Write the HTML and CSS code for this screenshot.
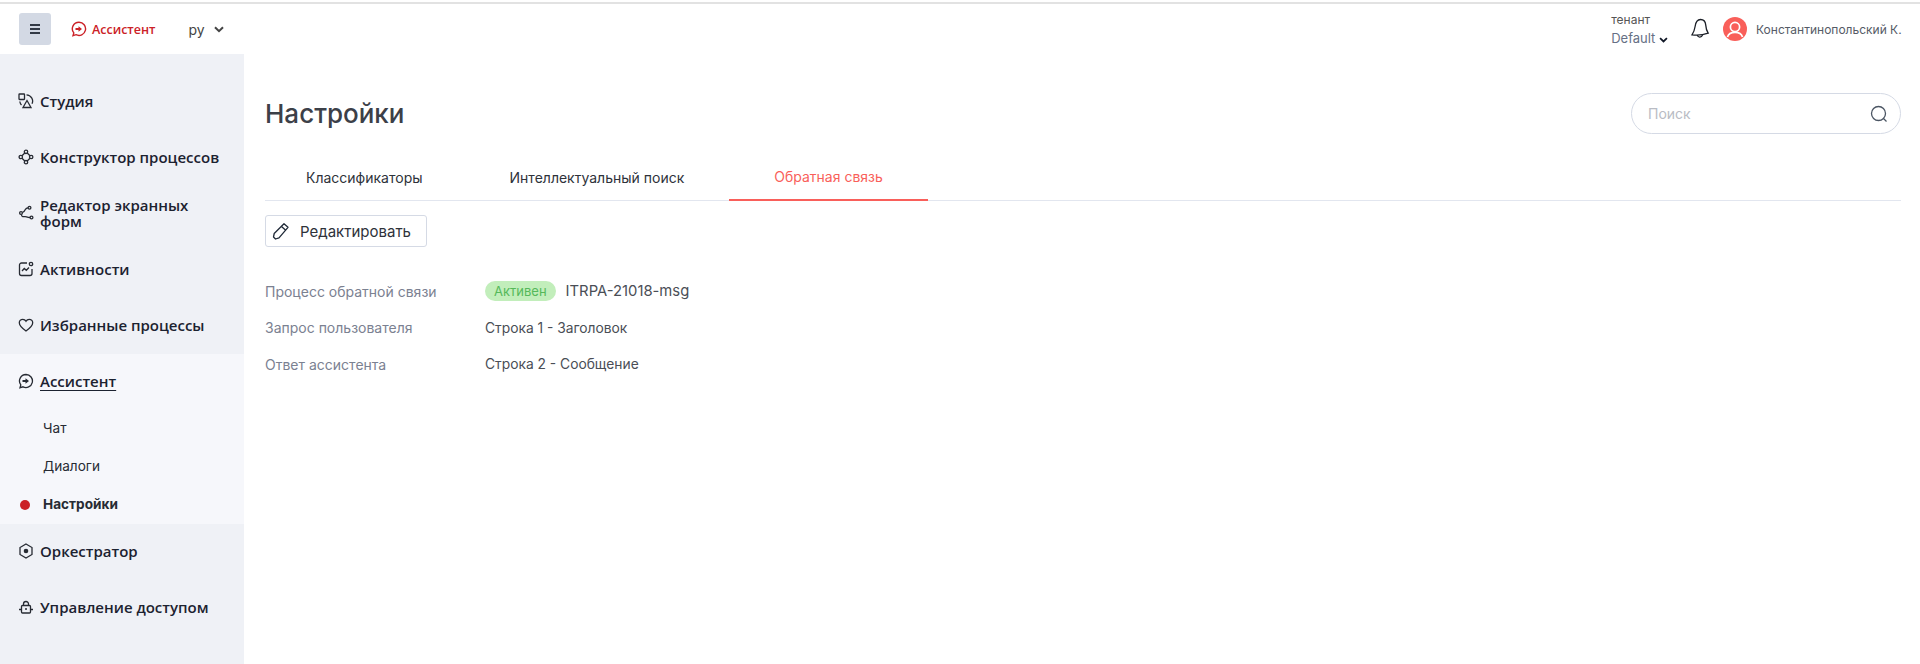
FILE: index.html
```html
<!DOCTYPE html>
<html lang="ru">

<head>
    <meta charset="UTF-8">
    <meta name="viewport" content="width=device-width, initial-scale=1.0">
    <title>Настройки</title>
    <link rel="stylesheet" href="styles.css">
</head>

<body>
    <header class="topbar">
        <button class="burger" aria-label="Меню">
            <svg width="14" height="14" viewBox="0 0 14 14" fill="none" stroke="currentColor" stroke-width="1.8">
                <path d="M2 3h10M2 7h10M2 11h10"></path>
            </svg>
        </button>
        <div class="brand">
            <svg width="16" height="16" viewBox="0 0 16 16" fill="none" stroke="currentColor" stroke-width="1.4">
                <path d="M8 1.2a6.6 6.6 0 1 1-3 12.5l-3 1 .8-2.8A6.6 6.6 0 0 1 8 1.2z"></path>
                <path d="M4.5 7h3V5.2L11 8l-3.500 2.800V9h-3z" fill="currentColor" stroke="none"></path>
            </svg>
            <span>Ассистент</span>
        </div>
        <div class="lang">
            <span>ру</span>
            <svg width="10" height="7" viewBox="0 0 10 7" fill="none" stroke="currentColor" stroke-width="2">
                <path d="M1 1.200l4 4 4-4"></path>
            </svg>
        </div>
        <div class="topbar-right">
            <div class="tenant">
                <span class="tenant-label">тенант</span>
                <span class="tenant-value">Default
                    <svg width="9" height="6" viewBox="0 0 10 7" fill="none" stroke="#111827" stroke-width="2">
                        <path d="M1 1.200l4 4 4-4"></path>
                    </svg>
                </span>
            </div>
            <svg class="bell" width="20" height="22" viewBox="0 0 20 22" fill="none" stroke="#1c2028" stroke-width="1.300">
                <path d="M10.500 1.500c3.200 0 5 2.400 5.200 5.400.2 3 .6 5.400 2.500 8.300-4.500 1.500-10.500 2.300-16.200 1.600 1.700-2.500 2.600-5 3.100-8.300.5-3.700 2.300-7 5.400-7z"></path>
                <path d="M7.300 17c.3 2.400 4 3 5.300.1"></path>
            </svg>
            <div class="avatar">
                <svg width="24" height="24" viewBox="0 0 24 24" fill="none" stroke="#fff" stroke-width="1.700">
                    <circle cx="12" cy="10" r="4.600"></circle>
                    <path d="M4.500 20c1-3.500 4-4.600 7.500-4.600s6.500 1.100 7.500 4.600"></path>
                </svg>
            </div>
            <span class="username">Константинопольский К.</span>
        </div>
    </header>

    <div class="layout">
        <nav class="sidebar">
            <a class="nav-item">
                <svg class="nav-icon" viewBox="0 0 16 16"><rect x="1" y="1" width="5.500" height="5.500" rx=".5"></rect><path d="M8.500 1.800a6.300 6.300 0 0 1 5.500 9M1.800 8.500a6.300 6.300 0 0 0 1.700 3.500"></path><path d="M9 7.500l4 7H5z"></path></svg>
                <span>Студия</span>
            </a>
            <a class="nav-item">
                <svg class="nav-icon" viewBox="0 0 16 16"><circle cx="8" cy="2.800" r="1.700"></circle><circle cx="8" cy="13.200" r="1.700"></circle><circle cx="2.800" cy="8" r="1.700"></circle><circle cx="13.200" cy="8" r="1.700"></circle><path d="M6.800 4L4 6.800M9.200 4L12 6.800M4 9.200L6.800 12M12 9.200L9.200 12"></path></svg>
                <span>Конструктор процессов</span>
            </a>
            <a class="nav-item">
                <svg class="nav-icon" viewBox="0 0 16 16"><circle cx="3" cy="8" r="1.400"></circle><circle cx="13.500" cy="12.500" r="1.400"></circle><circle cx="11.500" cy="2.800" r="1.400"></circle><path d="M10 2.800C6.500 2.800 8 6 4.500 7.500M3.500 9.500c0 3.500 3 1.500 5 2.300 1.500.6 2 .7 3.500.7"></path></svg>
                <span>Редактор экранных форм</span>
            </a>
            <a class="nav-item">
                <svg class="nav-icon" viewBox="0 0 16 16"><path d="M9 2H3.500A2 2 0 0 0 1.500 4v8.500a2 2 0 0 0 2 2H12a2 2 0 0 0 2-2V8"></path><circle cx="13" cy="3" r="1.700"></circle><path d="M4 10l2.300-2.500 2 1.800L11 6.500"></path></svg>
                <span>Активности</span>
            </a>
            <a class="nav-item">
                <svg class="nav-icon" viewBox="0 0 16 16"><path d="M8 14C3 10.500 1.300 8.300 1.300 5.800 1.300 3.700 3 2.300 4.800 2.300c1.300 0 2.500.7 3.200 1.900.7-1.200 1.900-1.900 3.200-1.900 1.800 0 3.500 1.400 3.500 3.500 0 2.500-1.700 4.700-6.700 8.200z"></path></svg>
                <span>Избранные процессы</span>
            </a>
            <div class="nav-group">
                <a class="nav-item">
                    <svg class="nav-icon" viewBox="0 0 16 16"><path d="M8 1.500a6.500 6.500 0 1 1-3 12.300l-3 .9.800-2.800A6.500 6.500 0 0 1 8 1.500z"></path><path class="solid" d="M4.500 7h3V5.200L11 8l-3.500 2.800V9h-3z"></path></svg>
                    <span class="current">Ассистент</span>
                </a>
                <a class="sub-item">Чат</a>
                <a class="sub-item">Диалоги</a>
                <a class="sub-item active">Настройки</a>
            </div>
            <a class="nav-item">
                <svg class="nav-icon" viewBox="0 0 16 16"><path d="M8 1l6 3.500v7L8 15l-6-3.500v-7z"></path><circle class="solid" cx="8" cy="8" r="2.300"></circle></svg>
                <span>Оркестратор</span>
            </a>
            <a class="nav-item">
                <svg class="nav-icon" viewBox="0 0 16 16"><rect x="3.500" y="6.500" width="9" height="7.500" rx="1"></rect><path d="M5.500 6.500V5a2.500 2.500 0 0 1 5 0v1.500M1 10.500h2.500M12.500 10.500H15"></path><circle class="solid" cx="8" cy="10" r="1"></circle></svg>
                <span>Управление доступом</span>
            </a>
        </nav>

        <main class="content">
            <div class="page-head">
                <h1>Настройки</h1>
                <div class="search">
                    <span>Поиск</span>
                    <svg width="18" height="18" viewBox="0 0 18 18" fill="none" stroke="#4b5563" stroke-width="1.300">
                        <circle cx="8.500" cy="8.500" r="7"></circle>
                        <path d="M13.500 13.500l3 3"></path>
                    </svg>
                </div>
            </div>

            <div class="tabs">
                <a class="tab">Классификаторы</a>
                <a class="tab">Интеллектуальный поиск</a>
                <a class="tab active">Обратная связь</a>
            </div>

            <button class="edit-button">
                <svg width="18" height="18" viewBox="0 0 18 18" fill="none" stroke="#1f2937" stroke-width="1.300" stroke-linejoin="round">
                    <path d="M12 1.800l4 3.500L7 15.800l-3.500 1.200-2-2 .7-3.500z"></path>
                    <path d="M9.500 4.500l4.200 3.700"></path>
                </svg>
                Редактировать
            </button>

            <dl class="props">
                <div class="prop">
                    <dt>Процесс обратной связи</dt>
                    <dd><span class="badge">Активен</span><span class="code">ITRPA-21018-msg</span></dd>
                </div>
                <div class="prop">
                    <dt>Запрос пользователя</dt>
                    <dd>Строка 1 - Заголовок</dd>
                </div>
                <div class="prop">
                    <dt>Ответ ассистента</dt>
                    <dd>Строка 2 - Сообщение</dd>
                </div>
            </dl>
        </main>
    </div>
</body>

</html>
```

FILE: styles.css
```css
*,
*::before,
*::after {
    box-sizing: border-box;
    margin: 0;
    padding: 0;
}

:root {
    --red: #cb2127;
    --coral: #f95f5a;
    --side: #eff1f6;
    --side-light: #f6f7fb;
    --line: #e2e6ef;
    --text: #272b33;
    --muted: #7b8191;
}

html,
body {
    height: 100%;
    overflow: hidden;
}

body {
    font-family: Inter, "Noto Sans", sans-serif;
    color: var(--text);
    background-color: white;
    border-top: 2px solid white;
    display: flex;
    flex-direction: column;
}

.topbar {
    height: 52px;
    flex: none;
    display: flex;
    align-items: center;
    padding: 0 19px;
    border-top: 2px solid #e2e2e2;
}

.burger {
    width: 32px;
    height: 32px;
    border: none;
    border-radius: 3px;
    background-color: #d3d9e4;
    color: #333a46;
    display: flex;
    align-items: center;
    justify-content: center;
}

.brand {
    display: flex;
    align-items: center;
    gap: 5px;
    margin-left: 20px;
    color: var(--red);
    font-family: "Open Sans", sans-serif;
    font-size: 12.500px;
    font-weight: 600;
}

.lang {
    display: flex;
    align-items: center;
    gap: 9px;
    margin-left: 33px;
    font-size: 14px;
    color: #444;
}

.topbar-right {
    margin-left: auto;
    display: flex;
    align-items: center;
}

.tenant {
    display: flex;
    flex-direction: column;
    gap: 3px;
    margin-right: 22px;
}

.tenant-label {
    font-size: 12px;
    color: #555;
}

.tenant-value {
    font-size: 13px;
    color: #667085;
}

.bell {
    margin-right: 13px;
}

.avatar {
    width: 24px;
    height: 24px;
    border-radius: 50%;
    background-color: var(--coral);
    overflow: hidden;
    margin-right: 9px;
}

.username {
    font-size: 12px;
    color: #555b66;
    width: 145px;
    white-space: nowrap;
}

.layout {
    flex: 1;
    min-height: 0;
    display: flex;
}

.sidebar {
    width: 244px;
    flex: none;
    background-color: var(--side);
    padding-top: 20px;
    font-family: "Open Sans", sans-serif;
}

.nav-item {
    height: 56px;
    padding: 0 18px 2px;
    display: flex;
    align-items: center;
    gap: 6px;
    font-size: 15px;
    font-weight: 600;
    line-height: 16px;
    color: #1c2230;
}

.nav-item span {
    max-width: 185px;
}

.nav-icon {
    width: 16px;
    height: 16px;
    flex: none;
    fill: none;
    stroke: #272b33;
    stroke-width: 1.300;
}

.nav-icon .solid {
    fill: #272b33;
    stroke: none;
}

.nav-group {
    background-color: var(--side-light);
    height: 170px;
}

.nav-group .nav-item {
    height: 55px;
}

.current {
    text-decoration: underline;
    text-underline-offset: 3px;
}

.sub-item {
    height: 38px;
    padding-left: 43px;
    display: flex;
    align-items: center;
    position: relative;
    font-family: Inter, sans-serif;
    font-size: 13.600px;
}

.sub-item.active {
    font-weight: 700;
}

.sub-item.active::before {
    content: "";
    position: absolute;
    left: 20px;
    top: 15px;
    width: 10px;
    height: 10px;
    border-radius: 50%;
    background-color: var(--red);
}

.content {
    flex: 1;
    min-width: 0;
    padding: 0 19px 0 21px;
}

.page-head {
    display: flex;
    align-items: center;
    justify-content: space-between;
    padding-top: 39px;
}

h1 {
    font-size: 26px;
    font-weight: 500;
    color: #3c4048;
}

.search {
    width: 270px;
    height: 41px;
    border: 1px solid #d5dae5;
    border-radius: 21px;
    padding: 0 12px 0 16px;
    display: flex;
    align-items: center;
    justify-content: space-between;
    font-size: 14px;
    color: #b9bcc4;
}

.tabs {
    display: flex;
    height: 67px;
    border-bottom: 1px solid var(--line);
}

.tab {
    padding: 20px 45px 0;
    display: flex;
    align-items: center;
    font-size: 14px;
    color: #2e323a;
    margin-bottom: -1px;
}

.tab:first-child {
    padding-left: 41px;
    padding-right: 42px;
}

.tab.active {
    color: var(--coral);
    border-bottom: 2px solid var(--coral);
}

.edit-button {
    margin-top: 14px;
    height: 32px;
    padding: 0 15px 0 6px;
    border: 1px solid #d5dae5;
    border-radius: 3px;
    background-color: white;
    display: flex;
    align-items: center;
    gap: 10px;
    font-family: inherit;
    font-size: 15px;
    color: #2e323a;
}

.props {
    margin-top: 26px;
    display: flex;
    flex-direction: column;
}

.prop {
    display: flex;
    align-items: center;
    height: 36.500px;
    font-size: 14px;
}

dt {
    width: 220px;
    color: var(--muted);
}

dd {
    font-size: 13.800px;
    color: #4a4e56;
    display: flex;
    align-items: center;
}

.badge {
    height: 20px;
    padding: 0 9px;
    margin-right: 10px;
    border-radius: 10px;
    background-color: #c2eebb;
    color: #55b95a;
    font-size: 13px;
    display: flex;
    align-items: center;
}

.code {
    font-size: 14.800px;
}
```
